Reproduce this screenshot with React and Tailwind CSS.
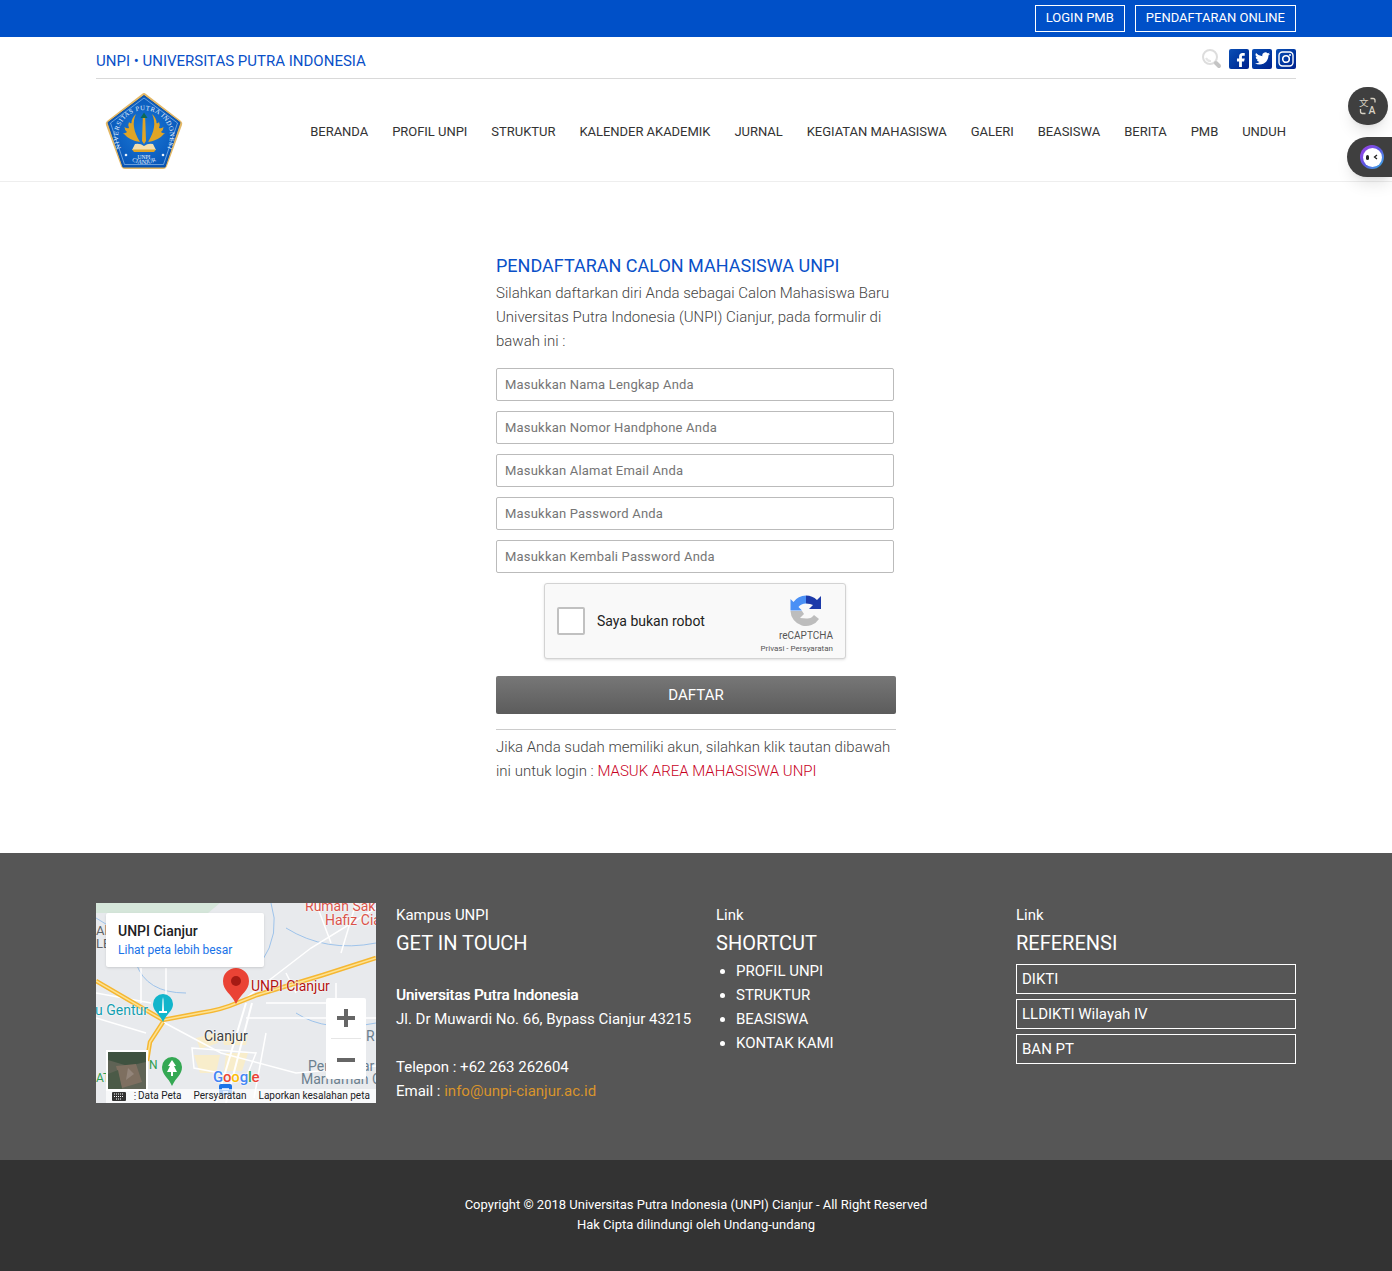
import { Facebook } from "lucide-react";

const font = { fontFamily: "Roboto, sans-serif" };

const navItems = [
  "BERANDA",
  "PROFIL UNPI",
  "STRUKTUR",
  "KALENDER AKADEMIK",
  "JURNAL",
  "KEGIATAN MAHASISWA",
  "GALERI",
  "BEASISWA",
  "BERITA",
  "PMB",
  "UNDUH",
];

const fields = [
  "Masukkan Nama Lengkap Anda",
  "Masukkan Nomor Handphone Anda",
  "Masukkan Alamat Email Anda",
  "Masukkan Password Anda",
  "Masukkan Kembali Password Anda",
];

const Logo = () => (
  <svg width="78" height="78" viewBox="0 0 78 78" className="mt-[2px]">
    <defs>
      <radialGradient id="logoBlue" cx="50%" cy="50%" r="60%">
        <stop offset="0%" stopColor="#1c7ad8" />
        <stop offset="100%" stopColor="#0552b5" />
      </radialGradient>
      <path id="logoArc" d="M17 58 A26 26 0 1 1 61 58" />
      <path id="logoArcBottom" d="M22 66 Q39 78 56 66" />
    </defs>
    <path d="M39 1 Q40 1 41 2 L76 29 Q78 31 77 33 L62 74 Q61 77 58 77 L20 77 Q17 77 16 74 L1 33 Q0 31 2 29 L37 2 Q38 1 39 1 Z" fill="#e3b866" />
    <path d="M39 3.500 L75 30.500 L60 75 L18 75 L3 30.500 Z" fill="url(#logoBlue)" stroke="#0b4ea5" strokeWidth="1" strokeLinejoin="round" />
    <path d="M39 6 L72.500 31 L58.500 72.500 L19.500 72.500 L5.500 31 Z" fill="none" stroke="#a9cdf0" strokeWidth="0.600" />
    <text fontSize="6.600" fill="#eaf2fb" fontFamily="Liberation Serif, serif" letterSpacing="0.500">
      <textPath href="#logoArc" startOffset="50%" textAnchor="middle">UNIVERSITAS PUTRA INDONESIA</textPath>
    </text>
    <path d="M37 49 L37.800 26 L39 23 L40.200 26 L41 49 L39 52 Z" fill="#e0a526" />
    <path d="M35.500 26 L39 20.500 L42.500 26 Z" fill="#0c6a58" />
    <path d="M35 50 Q25 49 18 41 Q21 41.500 22 40 Q19.500 38 19.500 35 Q22 37 24 36 Q22.500 33 24 30 Q25.500 32 26.500 31 Q26.500 26 31 22 Q25 34 35 50 Z" fill="#e0a526" />
    <path d="M43 50 Q53 49 60 41 Q57 41.500 56 40 Q58.500 38 58.500 35 Q56 37 54 36 Q55.500 33 54 30 Q52.500 32 51.500 31 Q51.500 26 47 22 Q53 34 43 50 Z" fill="#e0a526" />
    <path d="M30 52 Q35 51 39 54 Q43 51 48 52 L51 58 L27 58 Z" fill="#f3dfae" />
    <path d="M27 57.500 H51 L49 60 H29 Z" fill="#e0a526" />
    <circle cx="21" cy="63" r="1.300" fill="#eaf2fb" />
    <circle cx="58" cy="63" r="1.300" fill="#eaf2fb" />
    <text x="39" y="66.500" textAnchor="middle" fontSize="5.500" fill="#eaf2fb" fontFamily="Liberation Serif, serif">UNPI</text>
    <text fontSize="6" fill="#eaf2fb" fontFamily="Liberation Serif, serif">
      <textPath href="#logoArcBottom" startOffset="50%" textAnchor="middle">CIANJUR</textPath>
    </text>
  </svg>
);

const SocialTile = ({ children }) => (
  <div className="w-5 h-5 rounded-[2px] bg-gradient-to-br from-[#0d4fb5] to-[#00208e] flex items-center justify-center overflow-hidden">
    {children}
  </div>
);

const RecaptchaLogo = () => (
  <svg width="32" height="32" viewBox="0 0 32 32">
    <path d="M16 0.500 A15.500 15.500 0 0 0 3.500 7 L0.500 4 L0.500 15.500 L12 15.500 L8.500 12 Q11 8.500 16 8.500 Z" fill="#4a90f5" />
    <path d="M16 0.500 A15.500 15.500 0 0 1 27 5 L31 1 L31 14 L19 14 L23 10 Q20.500 8.500 16 8.500 Z" fill="#1c3aa9" />
    <path d="M0.500 16 A15.500 15.500 0 0 0 29 24 L24 20 Q21 24 16.500 23.500 L10 23 L14 19 L12 16 Z" fill="#bdbdbd" />
  </svg>
);

const labelHalo = "[text-shadow:0_0_2px_#fff,0_0_2px_#fff]";

const MapBox = () => (
  <div className="relative w-[280px] h-[200px] overflow-hidden bg-[#e8eaed]" style={font}>
    <svg width="280" height="200" viewBox="0 0 280 200" className="block">
      <path d="M0 0 H124 L100 20 H60 L40 10 H0 Z" fill="#d5e6da" />
      <g fill="#f8edcb">
        <path d="M100 135 L120 130 L122 140 L104 146 Z" />
        <path d="M126 132 H152 L150 142 H128 Z" />
        <path d="M98 152 H124 L120 170 H104 Z" />
        <path d="M130 150 H152 L146 168 H128 Z" />
      </g>
      <g fill="none" stroke="#8ab9ea" strokeWidth="0.800">
        <path d="M0 15 Q30 30 40 60 T90 90 M175 0 Q185 30 165 60 M200 110 Q230 130 280 120 M190 25 Q230 50 280 40" />
      </g>
      <g fill="none" stroke="#fff" strokeWidth="1.500">
        <path d="M150 95 L215 45 L280 5" />
        <path d="M67 119 L125 150 L200 170 L280 163" />
        <path d="M0 115 L50 130 M45 65 L45 100 M0 90 L55 100 M70 65 L70 100" />
        <path d="M150 100 L120 200 M156 100 L130 200" strokeWidth="2" />
        <path d="M150 115 H280 M170 100 H240 M240 80 V115" />
        <path d="M96 145 L160 150 L150 175 L98 165 Z M170 130 L158 195" />
        <path d="M220 0 L235 40 M260 0 L245 50 M190 70 L200 90" />
      </g>
      <path d="M0 78 L67 117 L104 110 Q125 107 141 100 L161 92 L227 72 L280 55 M67 119 L54 139 L51 158" fill="none" stroke="#f5b732" strokeWidth="4.500" />
      <path d="M0 78 L67 117 L104 110 Q125 107 141 100 L161 92 L227 72 L280 55 M67 119 L54 139 L51 158" fill="none" stroke="#fde293" strokeWidth="1.500" />
      <path d="M140 101 C135 90 127 88 127 78 A13 13 0 0 1 153 78 C153 88 145 90 140 101 Z" fill="#ea4335" />
      <circle cx="140" cy="78" r="5" fill="#a61b14" />
      <path d="M67 119 C63 110 57 108 57 101 A10 10 0 0 1 77 101 C77 108 71 110 67 119 Z" fill="#12b5cb" />
      <path d="M66 108 L66.500 97 L67 94 L67.500 97 L68 108 Z M63 108 H71 V110 H63 Z" fill="#fff" />
      <path d="M76 183 C72 174 66 172 66 164 A10 10 0 0 1 86 164 C86 172 80 174 76 183 Z" fill="#34a853" />
      <path d="M76 157 L80 163 L78 163 L81 169 L77 169 L77 173 L75 173 L75 169 L71 169 L74 163 L72 163 Z" fill="#fff" />
      <rect x="123" y="181" width="13" height="11" rx="2" fill="#1a73e8" />
      <path d="M126 186 H133 M127 189 H132" stroke="#fff" strokeWidth="1.500" />
    </svg>

    <span className={`absolute left-[209px] top-[-5px] text-[14px] leading-[16px] whitespace-nowrap text-[#d9534a] ${labelHalo}`}>Rumah Sak</span>
    <span className={`absolute left-[229px] top-[9px] text-[14px] leading-[16px] whitespace-nowrap text-[#d9534a] ${labelHalo}`}>Hafiz Cia</span>
    <span className="absolute left-0 top-[21px] text-[13px] leading-[14px] text-[#5f6368]">Al</span>
    <span className="absolute left-0 top-[34px] text-[13px] leading-[14px] text-[#5f6368]">LE</span>
    <span className={`absolute left-[155px] top-[75px] text-[14px] leading-[16px] whitespace-nowrap text-[#b31412] ${labelHalo}`}>UNPI Cianjur</span>
    <span className={`absolute left-[-1px] top-[99px] text-[14px] leading-[16px] whitespace-nowrap text-[#129eaf] ${labelHalo}`}>u Gentur</span>
    <span className={`absolute left-[108px] top-[125px] text-[14px] leading-[16px] text-[#3c4043] ${labelHalo}`}>Cianjur</span>
    <span className="absolute left-[212px] top-[155px] text-[14px] leading-[16px] text-[#6b7f8f]">Per</span>
    <span className="absolute left-[266px] top-[155px] text-[14px] leading-[16px] text-[#6b7f8f]">ar</span>
    <span className="absolute left-[205px] top-[168px] text-[14px] leading-[16px] whitespace-nowrap text-[#6b7f8f]">Marhamah C</span>
    <span className="absolute left-[270px] top-[125px] text-[14px] leading-[16px] text-[#6b7f8f]">R</span>
    <span className="absolute left-[53px] top-[155px] text-[12px] leading-[14px] text-[#2e9e4f]">N</span>
    <span className="absolute left-0 top-[168px] text-[12px] leading-[14px] text-[#2e9e4f]">AT</span>
    <span className={`absolute left-[117px] top-[165px] text-[15px] leading-[18px] font-medium tracking-[-0.2px] ${labelHalo}`}>
      <span className="text-[#4285f4]">G</span>
      <span className="text-[#ea4335]">o</span>
      <span className="text-[#fbbc05]">o</span>
      <span className="text-[#4285f4]">g</span>
      <span className="text-[#34a853]">l</span>
      <span className="text-[#ea4335]">e</span>
    </span>

    <div className="absolute left-[10px] top-[10px] w-[158px] h-[54px] bg-white rounded-[2px] shadow-sm pl-3 pt-[10px]">
      <div className="text-[14px] leading-[17px] font-medium text-[#202124]">UNPI Cianjur</div>
      <div className="text-[12px] leading-[17px] text-[#1a73e8] mt-[2px]">Lihat peta lebih besar</div>
    </div>

    <div className="absolute left-[230px] top-[95px] w-10 h-[81px] bg-white rounded-[2px] flex flex-col items-center">
      <svg width="40" height="40" viewBox="0 0 40 40">
        <path d="M18 11 H22 V18 H29 V22 H22 V29 H18 V22 H11 V18 H18 Z" fill="#666" />
      </svg>
      <div className="w-[30px] h-px bg-[#e6e6e6]" />
      <svg width="40" height="40" viewBox="0 0 40 40">
        <path d="M11 19 H29 V23 H11 Z" fill="#666" />
      </svg>
    </div>

    <div className="absolute left-[10px] top-[147px] w-[42px] h-[41px] border-2 border-white bg-[#5f6355] overflow-hidden">
      <svg width="38" height="37" viewBox="0 0 38 37" className="block">
        <path d="M0 0 H38 V10 L20 14 L0 8 Z" fill="#3f5240" />
        <path d="M8 14 L28 12 L34 30 L14 36 Z" fill="#7e6f60" />
        <path d="M0 22 L10 18 L14 37 H0 Z" fill="#4b5a47" />
        <path d="M20 16 L26 22 L18 28 Z" fill="#93857a" />
      </svg>
    </div>

    <div className="absolute right-0 bottom-0 left-[10px] h-[14px] bg-white/70 flex items-center text-[10px] leading-[14px] text-[#202124] pl-[6px]">
      <svg width="14" height="9" viewBox="0 0 14 9" className="mr-[4px]">
        <rect width="14" height="9" rx="1" fill="#333" />
        <path d="M2 2 H12 M2 4.500 H12 M4 7 H10" stroke="#fff" strokeWidth="1" strokeDasharray="1 1" />
      </svg>
      <span className="w-[8px] text-[#555]">⋮</span>
      <span className="mr-3">Data Peta</span>
      <span className="mr-3">Persyaratan</span>
      <span>Laporkan kesalahan peta</span>
    </div>
  </div>
);

export default function App() {
  return (
    <div className="relative bg-white text-[#555] min-h-[1271px]" style={font}>
      {/* Top bar */}
      <div className="h-[37px] bg-[#0050c8]">
        <div className="w-[1200px] mx-auto h-full flex justify-end items-center gap-[10px]">
          <a className="h-[27px] px-[10px] pb-[2px] border border-white text-white text-[13px] flex items-center">LOGIN PMB</a>
          <a className="h-[27px] px-[10px] pb-[2px] border border-white text-white text-[13px] flex items-center">PENDAFTARAN ONLINE</a>
        </div>
      </div>

      {/* Header */}
      <header className="h-[145px] border-b border-[#eee]">
        <div className="w-[1200px] mx-auto">
          <div className="h-[42px] border-b border-[#d9d9d9] flex items-center justify-between">
            <div className="text-[15px] text-[#0a50c8] pt-[8px]">UNPI • UNIVERSITAS PUTRA INDONESIA</div>
            <div className="flex items-center pt-[2px]">
              <svg width="20" height="22" viewBox="0 0 20 22" className="mr-[7px]">
                <circle cx="8" cy="9" r="7" fill="#fff" stroke="#ddd" strokeWidth="2" />
                <path d="M4 10 A5 5 0 0 0 9 13" fill="none" stroke="#e5e5e5" strokeWidth="2" />
                <path d="M14 15 L17 18" stroke="#c4c4c4" strokeWidth="4" strokeLinecap="round" />
              </svg>
              <SocialTile>
                <Facebook size={20} fill="#fff" stroke="none" className="mt-[3px] ml-[3px]" />
              </SocialTile>
              <div className="ml-[3px]">
                <SocialTile>
                  <svg width="15" height="13" viewBox="0 0 24 20">
                    <path d="M24 2.400 a10 10 0 0 1 -2.800 .8 A5 5 0 0 0 23.300 .5 a10 10 0 0 1 -3.100 1.200 A4.900 4.900 0 0 0 11.800 6.200 A14 14 0 0 1 1.700 1 a4.900 4.900 0 0 0 1.500 6.600 A5 5 0 0 1 1 7 v.1 a4.900 4.900 0 0 0 3.900 4.800 a5 5 0 0 1 -2.200 .1 a4.900 4.900 0 0 0 4.600 3.400 A10 10 0 0 1 0 17.500 A14 14 0 0 0 7.500 19.700 c9 0 14-7.500 14-14 v-.6 A10 10 0 0 0 24 2.400 Z" fill="#fff" />
                  </svg>
                </SocialTile>
              </div>
              <div className="ml-[4px]">
                <SocialTile>
                  <svg width="16" height="16" viewBox="0 0 16 16" fill="none" stroke="#fff">
                    <rect x="1" y="1" width="14" height="14" rx="3.500" strokeWidth="1.400" />
                    <circle cx="8" cy="8" r="3.300" strokeWidth="1.600" />
                    <circle cx="12" cy="4" r="0.600" fill="#fff" />
                  </svg>
                </SocialTile>
              </div>
            </div>
          </div>
          <div className="flex items-center justify-between h-[102px] pl-[9px] pr-[10px]">
            <Logo />
            <nav className="flex gap-6 text-[13px] tracking-[-0.03px] text-[#333] pt-[4px]">
              {navItems.map((item) => (
                <a key={item}>{item}</a>
              ))}
            </nav>
          </div>
        </div>
      </header>

      {/* Form */}
      <main className="h-[671px] pt-[72px]">
        <div className="w-[400px] mx-auto">
          <h2 className="text-[18px] leading-[24px] text-[#0a50c8]">PENDAFTARAN CALON MAHASISWA UNPI</h2>
          <p className="text-[15px] font-light leading-[24px] text-[#444] mt-[3px]">
            Silahkan daftarkan diri Anda sebagai Calon Mahasiswa Baru Universitas Putra Indonesia (UNPI) Cianjur, pada formulir di bawah ini :
          </p>
          <div className="w-[398px] flex flex-col gap-[10px] mt-[15px]">
            {fields.map((f) => (
              <input
                key={f}
                placeholder={f}
                className="h-[33px] border border-[#bbb] rounded-[2px] px-2 pb-[1px] text-[13px] tracking-[0.2px] placeholder:text-[#757575] bg-white outline-none"
              />
            ))}
          </div>
          <div className="w-[302px] h-[76px] ml-[48px] mt-[10px] bg-[#f9f9f9] border border-[#d3d3d3] rounded-[3px] shadow-sm flex items-center justify-between pl-3 pr-3">
            <div className="flex items-center gap-3">
              <div className="w-7 h-7 mb-[1px] bg-white border-2 border-[#c1c1c1] rounded-[2px]" />
              <span className="text-[14px] text-[#222]">Saya bukan robot</span>
            </div>
            <div className="flex flex-col items-end pt-[7px]">
              <div className="mr-[11px]"><RecaptchaLogo /></div>
              <span className="text-[10px] leading-[12px] text-[#555] mt-[3px]">reCAPTCHA</span>
              <span className="text-[8px] leading-[12px] text-[#555] mt-[1px]">Privasi - Persyaratan</span>
            </div>
          </div>
          <button className="w-full h-[38px] mt-[17px] rounded-[2px] bg-gradient-to-b from-[#777] to-[#5c5c5c] text-white text-[15px]">DAFTAR</button>
          <div className="border-t border-[#ccc] mt-[15px] pt-[5px] text-[15px] font-light leading-[24px] text-[#444]">
            Jika Anda sudah memiliki akun, silahkan klik tautan dibawah ini untuk login : <a className="text-[#c8001e]">MASUK AREA MAHASISWA UNPI</a>
          </div>
        </div>
      </main>

      {/* Footer */}
      <footer className="h-[307px] bg-[#565656] text-white pt-[50px]">
        <div className="w-[1200px] mx-auto flex text-[15px] leading-[24px]">
          <div className="w-[300px]"><MapBox /></div>
          <div className="w-[320px]">
            <div>Kampus UNPI</div>
            <h3 className="text-[20px] leading-[28px] mt-[2px]">GET IN TOUCH</h3>
            <div className="mt-[26px] [text-shadow:0.6px_0_0_#fff]">Universitas Putra Indonesia</div>
            <div>Jl. Dr Muwardi No. 66, Bypass Cianjur 43215</div>
            <div className="mt-6">Telepon : +62 263 262604</div>
            <div>Email : <a className="text-[#d9942b]">info@unpi-cianjur.ac.id</a></div>
          </div>
          <div className="w-[300px]">
            <div>Link</div>
            <h3 className="text-[20px] leading-[28px] mt-[2px]">SHORTCUT</h3>
            <ul className="list-disc pl-5 mt-[2px]">
              <li>PROFIL UNPI</li>
              <li>STRUKTUR</li>
              <li>BEASISWA</li>
              <li>KONTAK KAMI</li>
            </ul>
          </div>
          <div className="w-[280px]">
            <div>Link</div>
            <h3 className="text-[20px] leading-[28px] mt-[2px]">REFERENSI</h3>
            <div className="flex flex-col gap-[5px] mt-[7px]">
              {["DIKTI", "LLDIKTI Wilayah IV", "BAN PT"].map((r) => (
                <a key={r} className="h-[30px] border border-white px-[5px] flex items-center">{r}</a>
              ))}
            </div>
          </div>
        </div>
      </footer>

      {/* Copyright */}
      <div className="h-[111px] bg-[#333] text-white text-[13px] leading-[20px] text-center pt-[35px]">
        <div>Copyright © 2018 Universitas Putra Indonesia (UNPI) Cianjur - All Right Reserved</div>
        <div>Hak Cipta dilindungi oleh Undang-undang</div>
      </div>

      {/* Floating widgets */}
      <div className="absolute right-[4px] top-[87px] w-10 h-[38px] rounded-full bg-[#3f3f3f] shadow-lg flex items-center justify-center">
        <svg width="20" height="20" viewBox="0 0 20 20" fill="none" stroke="#d8d2c4" strokeWidth="1.300">
          <path d="M12.500 2.500 H15 Q17 2.500 17 4.500 V6.500" />
          <path d="M2.500 13 V15.500 Q2.500 17.500 4.500 17.500 H7.500" />
          <text x="1" y="10" fontSize="9.500" fill="#d8d2c4" stroke="none" fontFamily="Noto Sans CJK SC, sans-serif">文</text>
          <text x="10.500" y="18" fontSize="10.500" fontWeight="500" fill="#d8d2c4" stroke="none" fontFamily="Roboto, sans-serif">A</text>
        </svg>
      </div>
      <div className="absolute right-0 top-[137px] w-[45px] h-10 rounded-l-full bg-[#3f3f3f] shadow-lg flex items-center pl-[13px]">
        <div className="w-6 h-6 rounded-full bg-gradient-to-br from-[#a23be8] via-[#5a55e0] to-[#22b4e6] flex items-center justify-center">
          <div className="w-[19px] h-[19px] rounded-full bg-white flex items-center justify-center gap-[4px]">
            <span className="w-[3px] h-[5px] rounded-full bg-[#222]" />
            <svg width="5" height="6" viewBox="0 0 5 6">
              <path d="M4 1 L1.500 3 L4 5" fill="none" stroke="#222" strokeWidth="1.300" />
            </svg>
          </div>
        </div>
      </div>
    </div>
  );
}
